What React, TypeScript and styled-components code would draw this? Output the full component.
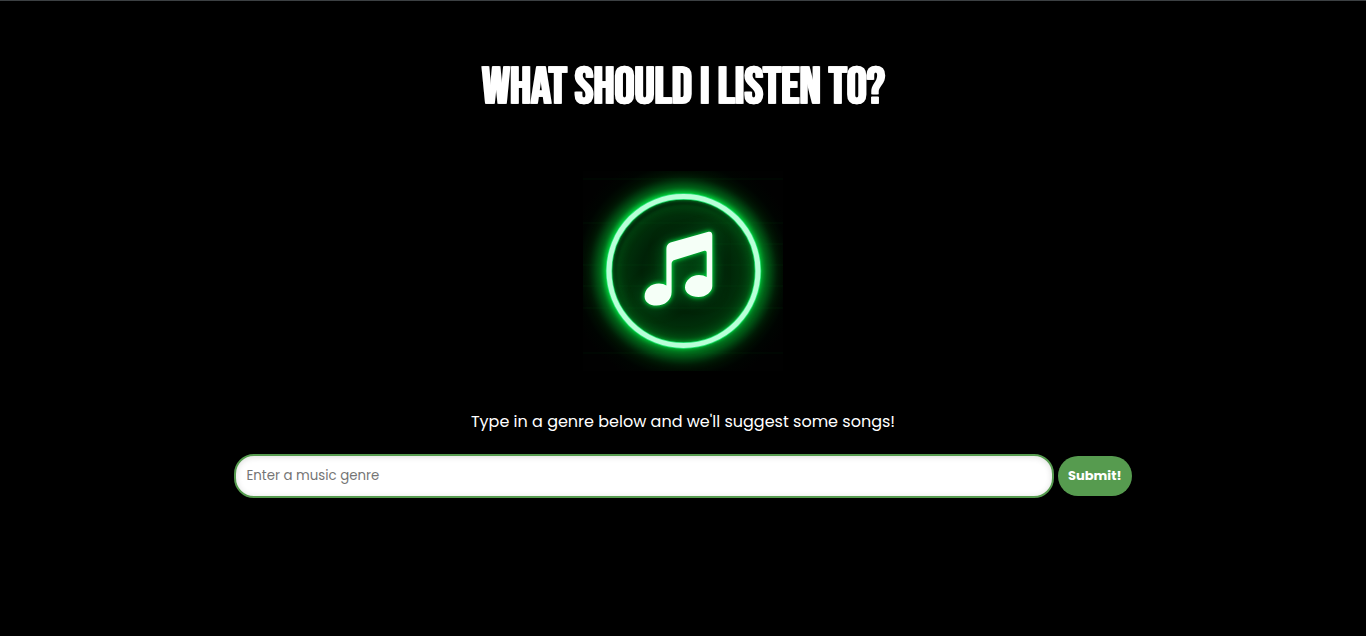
import React, { useState } from "react";
import styled, { createGlobalStyle } from "styled-components";

const GlobalStyle = createGlobalStyle`
  * {
    box-sizing: border-box;
  }
  body {
    margin: 0;
    background: #000;
    color: #fff;
    font-family: "Poppins", "Inter", sans-serif;
  }
`;

const Page = styled.main`
  display: flex;
  flex-direction: column;
  align-items: center;
  min-height: 100vh;
  border-top: 1px solid #3c4043;
  padding: 48px 16px;
`;

const Title = styled.h1`
  margin: 0;
  font-family: "Bebas Neue", "Liberation Sans Narrow", sans-serif;
  font-size: 50px;
  line-height: 78px;
  font-weight: 700;
  text-align: center;
  text-shadow: 1px 0 #fff;
  text-transform: uppercase;
`;

const Logo = styled.svg`
  width: 200px;
  height: 200px;
  margin-top: 44px;
`;

const Prompt = styled.label`
  margin-top: 39px;
  font-size: 16px;
  line-height: 24px;
  text-align: center;
`;

const Form = styled.form`
  display: flex;
  align-items: center;
  justify-content: center;
  gap: 4px;
  width: 100%;
  margin-top: 20px;
`;

const GenreInput = styled.input`
  width: 60vw;
  height: 44px;
  padding: 10px;
  border: 2px solid #569b4f;
  border-radius: 20px;
  background: #fff;
  box-shadow: inset 0 1px 6px #ddd;
  color: #000;
  font-family: inherit;
  &::placeholder {
    color: #757575;
  }
`;

const SubmitButton = styled.button`
  flex: none;
  height: 40px;
  padding: 10px;
  border: 0;
  border-radius: 20px;
  background: #569b4f;
  color: #fff;
  font-family: inherit;
  font-size: 13px;
  font-weight: 700;
  cursor: pointer;
`;

const NOTE =
  "M83.4 78 Q83.4 73.4 87.5 71.6 L125.5 60.8 Q129.3 60 129.3 64.5 V115 C129.3 121 123 126 115.5 126 C108 126 102 122 102 116.5 C102 109.5 108.5 104 116 104 Q120.5 104 123.7 106 V81.5 Q123.7 79.2 121.4 79.8 L91.5 89 Q88.6 90 88.6 92.8 V121 C88.6 129 82 134.6 73.5 134.6 C66.5 134.6 61.6 131 61.6 125.5 C61.6 118 68 112.6 76 112.6 Q80.5 112.6 83.4 114.6 Z";

function NeonNote() {
  return (
    <Logo viewBox="0 0 200 200" role="img" aria-label="Neon music note">
      <defs>
        <radialGradient id="wall" cx="100" cy="100" r="118" gradientUnits="userSpaceOnUse">
          <stop offset="0" stopColor="#00360c" />
          <stop offset="0.35" stopColor="#002207" />
          <stop offset="0.6" stopColor="#003a0d" />
          <stop offset="0.7" stopColor="#003a0d" />
          <stop offset="0.8" stopColor="#001504" />
          <stop offset="0.9" stopColor="#000401" />
          <stop offset="1" stopColor="#010101" />
        </radialGradient>
        <filter id="wide" x="-30%" y="-30%" width="160%" height="160%" colorInterpolationFilters="sRGB">
          <feGaussianBlur stdDeviation="7" />
        </filter>
        <filter id="near" x="-20%" y="-20%" width="140%" height="140%" colorInterpolationFilters="sRGB">
          <feGaussianBlur stdDeviation="2" />
        </filter>
      </defs>
      <rect width="200" height="200" fill="url(#wall)" />
      <g stroke="#00651d" strokeOpacity="0.14">
        <path d="M0 8H200M0 52H200M90 73H200M0 94H200M0 115H200M0 137H200M0 182H200" />
      </g>
      <circle cx="100.5" cy="100" r="78" fill="none" stroke="#00a02a" strokeOpacity="0.8" strokeWidth="12" filter="url(#wide)" />
      <circle cx="102" cy="102.5" r="73" fill="none" stroke="#000" strokeOpacity="0.7" strokeWidth="7" filter="url(#near)" />
      <circle cx="100.2" cy="99.7" r="75.5" fill="none" stroke="#00d83c" strokeWidth="8" filter="url(#near)" />
      <circle cx="100.5" cy="100" r="74.5" fill="none" stroke="#2be77a" strokeWidth="6.4" />
      <circle cx="100.5" cy="100" r="74.5" fill="none" stroke="#b9ffd8" strokeWidth="5" />
      <path d={NOTE} fill="none" stroke="#00a332" strokeOpacity="0.5" strokeWidth="6" filter="url(#wide)" />
      <path d={NOTE} fill="#00d83e" stroke="#00d83e" strokeWidth="2" filter="url(#near)" />
      <path d={NOTE} fill="#f5fff7" />
    </Logo>
  );
}

export default function App() {
  const [genre, setGenre] = useState("");
  return (
    <>
      <GlobalStyle />
      <Page>
        <Title>What should I listen to?</Title>
        <NeonNote />
        <Prompt htmlFor="genre">Type in a genre below and we'll suggest some songs!</Prompt>
        <Form onSubmit={(event) => event.preventDefault()}>
          <GenreInput
            id="genre"
            type="text"
            placeholder="Enter a music genre"
            value={genre}
            onChange={(event) => setGenre(event.target.value)}
          />
          <SubmitButton type="submit">Submit!</SubmitButton>
        </Form>
      </Page>
    </>
  );
}
